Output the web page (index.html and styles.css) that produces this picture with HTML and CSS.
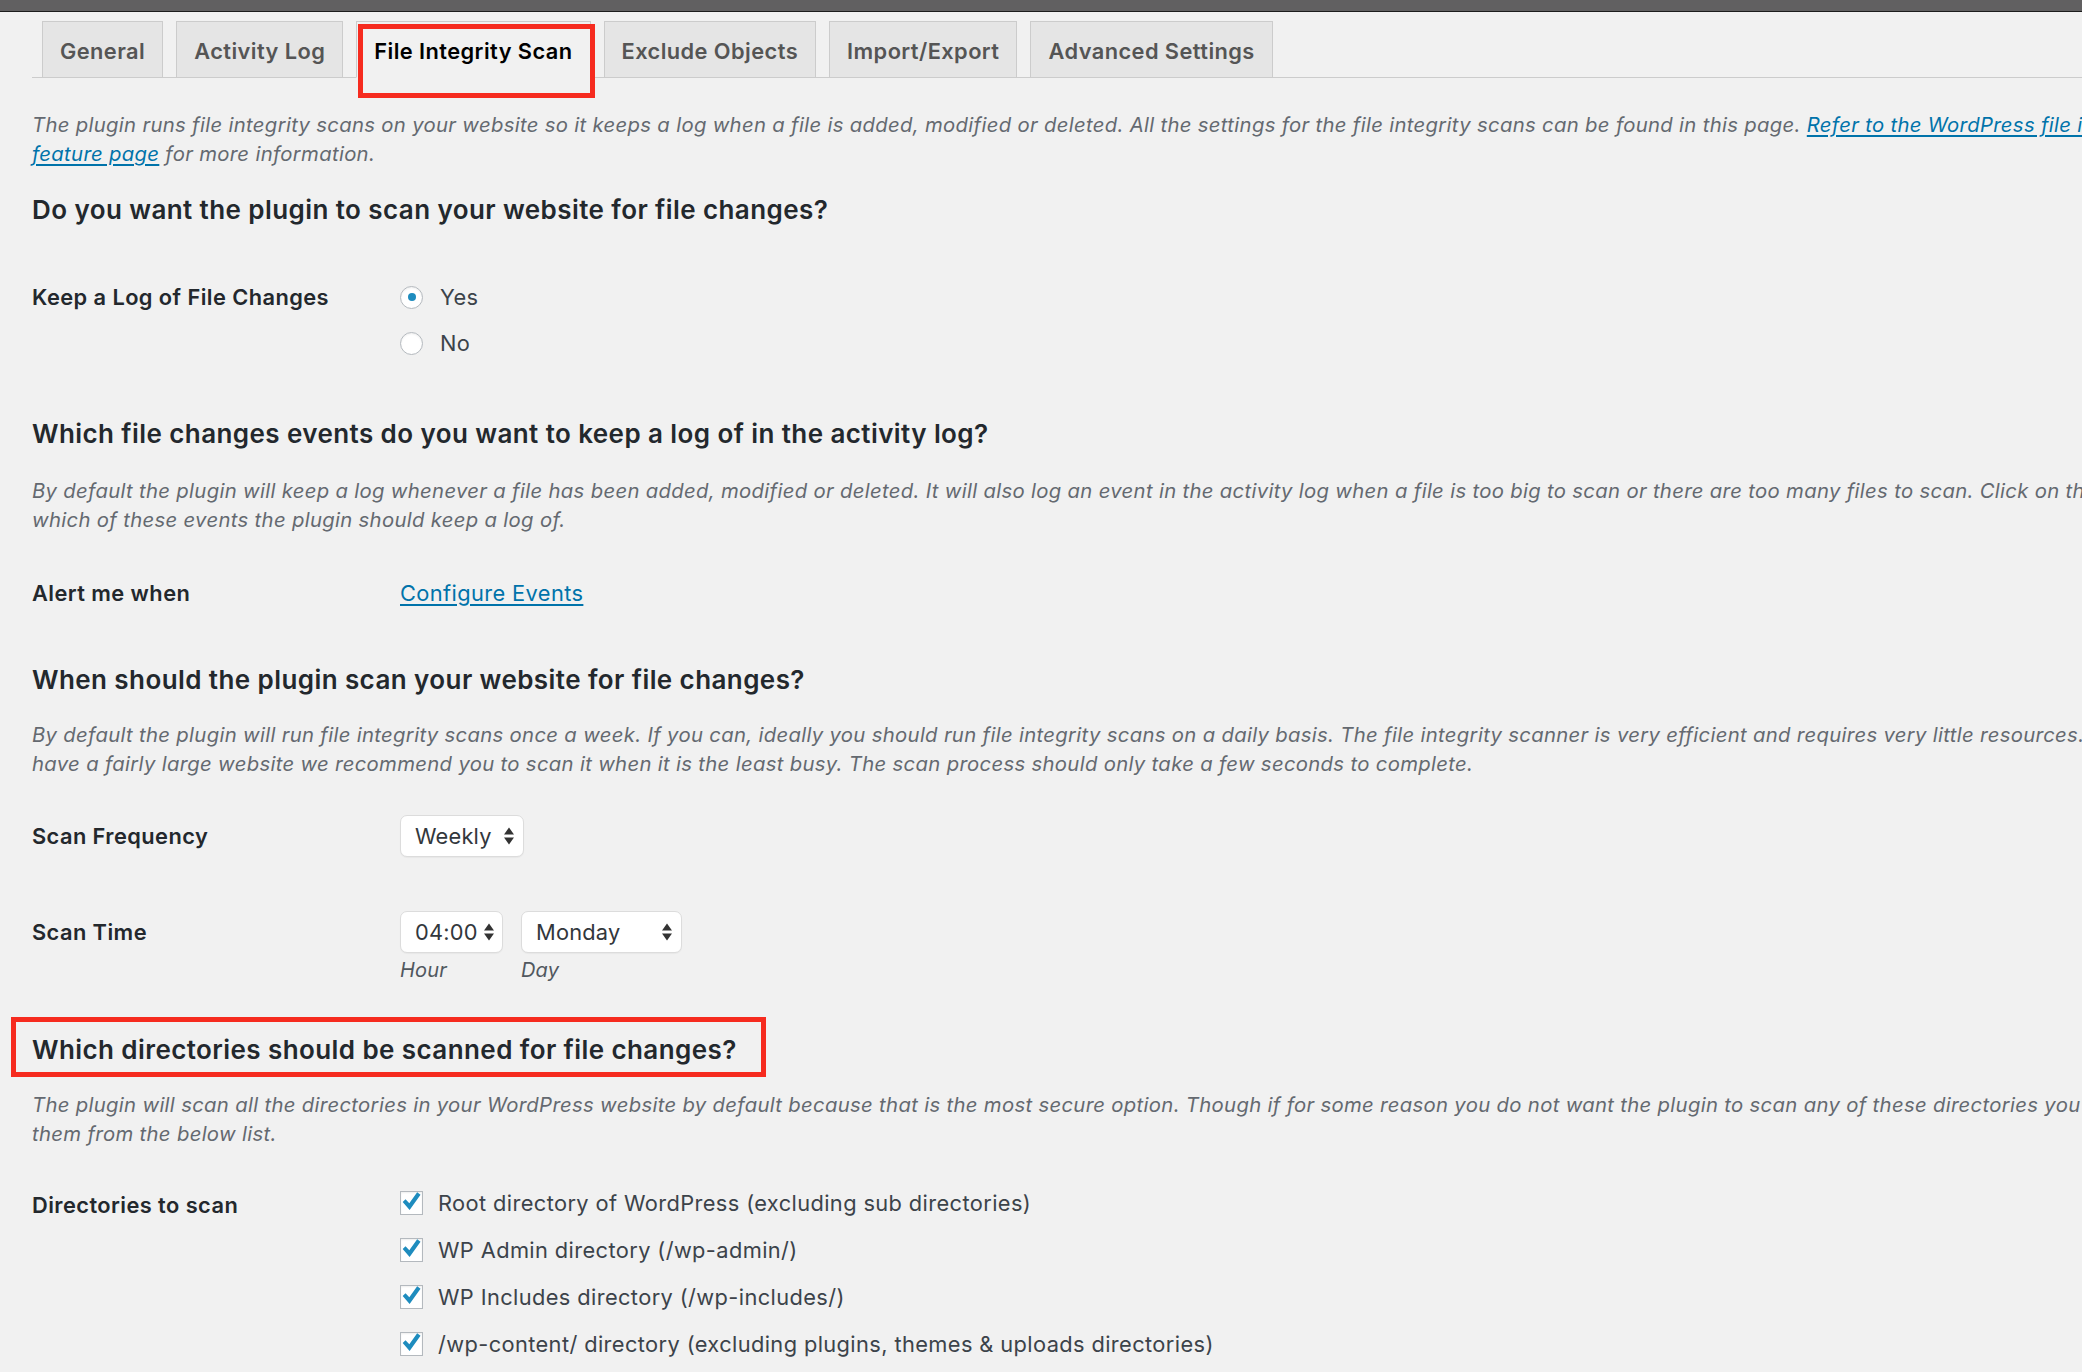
FILE: index.html
```html
<!DOCTYPE html>
<html lang="en">
<head>
<meta charset="utf-8">
<title>File Integrity Scan</title>
<link rel="stylesheet" href="styles.css">
</head>
<body>
<div class="topbar"></div>
<div class="wrap">
  <nav class="tabs">
    <a class="tab">General</a>
    <a class="tab">Activity Log</a>
    <a class="tab active">File Integrity Scan</a>
    <a class="tab">Exclude Objects</a>
    <a class="tab">Import/Export</a>
    <a class="tab">Advanced Settings</a>
  </nav>

  <p class="desc d1">The plugin runs file integrity scans on your website so it keeps a log when a file is added, modified or deleted. All the settings for the file integrity scans can be found in this page. <a class="link">Refer to the WordPress file integrity scans</a><br><a class="link">feature page</a> for more information.</p>

  <h2 class="h h1">Do you want the plugin to scan your website for file changes?</h2>
  <div class="row r1">
    <div class="label">Keep a Log of File Changes</div>
    <div class="field">
      <label class="opt"><span class="radio checked"></span>Yes</label>
      <label class="opt"><span class="radio"></span>No</label>
    </div>
  </div>

  <h2 class="h h2">Which file changes events do you want to keep a log of in the activity log?</h2>
  <p class="desc d2">By default the plugin will keep a log whenever a file has been added, modified or deleted. It will also log an event in the activity log when a file is too big to scan or there are too many files to scan. Click on the link to specify<br>which of these events the plugin should keep a log of.</p>
  <div class="row r2">
    <div class="label">Alert me when</div>
    <div class="field"><a class="link plain">Configure Events</a></div>
  </div>

  <h2 class="h h3">When should the plugin scan your website for file changes?</h2>
  <p class="desc d3">By default the plugin will run file integrity scans once a week. If you can, ideally you should run file integrity scans on a daily basis. The file integrity scanner is very efficient and requires very little resources. If you<br>have a fairly large website we recommend you to scan it when it is the least busy. The scan process should only take a few seconds to complete.</p>
  <div class="row r3">
    <div class="label sel-label">Scan Frequency</div>
    <div class="field">
      <div class="select w-weekly"><span>Weekly</span><svg class="arr" viewBox="0 0 10 20" width="10" height="20"><polygon points="0,8.5 5,1.5 10,8.5"/><polygon points="0,11.5 5,18.5 10,11.5"/></svg></div>
    </div>
  </div>
  <div class="row r4">
    <div class="label sel-label">Scan Time</div>
    <div class="field time">
      <div class="tcol">
        <div class="select w-hour"><span>04:00</span><svg class="arr" viewBox="0 0 10 20" width="10" height="20"><polygon points="0,8.5 5,1.5 10,8.5"/><polygon points="0,11.5 5,18.5 10,11.5"/></svg></div>
        <div class="cap">Hour</div>
      </div>
      <div class="tcol">
        <div class="select w-day"><span>Monday</span><svg class="arr" viewBox="0 0 10 20" width="10" height="20"><polygon points="0,8.5 5,1.5 10,8.5"/><polygon points="0,11.5 5,18.5 10,11.5"/></svg></div>
        <div class="cap">Day</div>
      </div>
    </div>
  </div>

  <h2 class="h boxed">Which directories should be scanned for file changes?</h2>
  <p class="desc d4">The plugin will scan all the directories in your WordPress website by default because that is the most secure option. Though if for some reason you do not want the plugin to scan any of these directories you can uncheck<br>them from the below list.</p>
  <div class="row r5">
    <div class="label cb-label">Directories to scan</div>
    <div class="field">
      <label class="opt cbopt"><span class="cb"><svg viewBox="0 0 20 20" width="21" height="21"><path d="M1.6 10.4 L4.3 7.9 L7.9 11.6 L15.4 1.2 L18.6 3.6 L8.2 18.2 Z"/></svg></span>Root directory of WordPress (excluding sub directories)</label>
      <label class="opt cbopt"><span class="cb"><svg viewBox="0 0 20 20" width="21" height="21"><path d="M1.6 10.4 L4.3 7.9 L7.9 11.6 L15.4 1.2 L18.6 3.6 L8.2 18.2 Z"/></svg></span>WP Admin directory (/wp-admin/)</label>
      <label class="opt cbopt"><span class="cb"><svg viewBox="0 0 20 20" width="21" height="21"><path d="M1.6 10.4 L4.3 7.9 L7.9 11.6 L15.4 1.2 L18.6 3.6 L8.2 18.2 Z"/></svg></span>WP Includes directory (/wp-includes/)</label>
      <label class="opt cbopt"><span class="cb"><svg viewBox="0 0 20 20" width="21" height="21"><path d="M1.6 10.4 L4.3 7.9 L7.9 11.6 L15.4 1.2 L18.6 3.6 L8.2 18.2 Z"/></svg></span>/wp-content/ directory (excluding plugins, themes &amp; uploads directories)</label>
    </div>
  </div>
</div>
</body>
</html>
```

FILE: styles.css
```css
* { box-sizing: border-box; }

html, body {
  margin: 0;
  padding: 0;
  overflow: hidden;
  background: #f1f1f1;
}

body {
  width: 2082px;
  height: 1372px;
  font-family: Inter, "Noto Sans", "Liberation Sans", sans-serif;
  color: #23282d;
}

.topbar {
  height: 12px;
  background: #616061;
  border-bottom: 1px solid #1c1c1c;
}

.wrap {
  padding-left: 32px;
}

/* Tabs */
.tabs {
  display: flex;
  align-items: flex-end;
  gap: 13px;
  height: 66px;
  padding-top: 9px;
  padding-left: 10px;
  border-bottom: 1px solid #cccccc;
}

.tab {
  position: relative;
  display: block;
  height: 57px;
  margin-bottom: -1px;
  padding: 11px 17px 0;
  border: 1px solid #cccccc;
  background: #e5e5e5;
  color: #555555;
  font-size: 21.8px;
  font-weight: 600;
  letter-spacing: 0.02em;
  line-height: 36px;
  white-space: nowrap;
}

.tab.active {
  background: #f1f1f1;
  border-bottom-color: #f1f1f1;
  color: #000000;
}

.tab.active::after {
  content: "";
  position: absolute;
  left: 1px;
  right: -5px;
  top: 2px;
  height: 64px;
  border: 5px solid #f62b1f;
  z-index: 2;
}

/* Text */
.desc {
  margin: 0;
  font-size: 20.3px;
  letter-spacing: 0.016em;
  line-height: 29px;
  font-style: italic;
  color: #646970;
  white-space: nowrap;
}

.link {
  color: #0073aa;
  text-decoration: underline;
  text-underline-offset: 3px;
}

.h {
  margin: 0;
  font-size: 26px;
  font-weight: 600;
  letter-spacing: 0.016em;
  line-height: 32px;
  color: #23282d;
  white-space: nowrap;
}

.d1 { margin-top: 32px; }
.h1 { margin-top: 26px; }
.r1 { margin-top: 48px; }
.h2 { margin-top: 52px; }
.d2 { margin-top: 26px; }
.r2 { margin-top: 36px; }
.h3 { margin-top: 48px; }
.d3 { margin-top: 24px; }
.r3 { margin-top: 37px; }
.r4 { margin-top: 54px; }
.d4 { margin-top: 13px; }
.r5 { margin-top: 31px; }

.boxed {
  display: inline-block;
  margin-top: 32px;
  margin-left: -21px;
  padding: 12px 24px 6px 16px;
  border: 5px solid #f62b1f;
}

/* Rows */
.row {
  display: grid;
  grid-template-columns: 368px auto;
  align-items: start;
}

.label {
  font-size: 21.8px;
  font-weight: 600;
  letter-spacing: 0.02em;
  line-height: 46px;
  color: #23282d;
  white-space: nowrap;
}

.sel-label { line-height: 42px; }
.cb-label { line-height: 47px; padding-top: 3px; }

.field {
  font-size: 21.8px;
  letter-spacing: 0.018em;
  line-height: 46px;
  color: #3c434a;
}

.opt {
  display: flex;
  align-items: center;
  gap: 17px;
  height: 46px;
  color: #3c434a;
  white-space: nowrap;
}

.cbopt {
  height: 47px;
  gap: 15px;
}

.radio {
  position: relative;
  width: 23px;
  height: 23px;
  border-radius: 50%;
  border: 1.5px solid #b4b9be;
  background: #ffffff;
  box-shadow: inset 0 1px 2px rgba(0, 0, 0, 0.07);
  flex: none;
}

.radio.checked::after {
  content: "";
  position: absolute;
  left: 50%;
  top: 50%;
  width: 8px;
  height: 8px;
  margin: -4px 0 0 -4px;
  border-radius: 50%;
  background: #1e8cbe;
}

.cb {
  display: flex;
  align-items: flex-start;
  justify-content: center;
  width: 23px;
  height: 24px;
  border: 1.5px solid #b4b9be;
  background: #ffffff;
  box-shadow: inset 0 1px 2px rgba(0, 0, 0, 0.07);
  flex: none;
  overflow: visible;
}

.cb svg { fill: #1e8cbe; flex: none; margin-top: -1px; }

/* Selects */
.select {
  display: flex;
  align-items: center;
  justify-content: space-between;
  height: 42px;
  padding: 0 9px 0 14px;
  border: 1px solid #dcdcdc;
  border-radius: 7px;
  background: #ffffff;
  box-shadow: 0 1px 1px rgba(0, 0, 0, 0.04);
  font-size: 21.8px;
  letter-spacing: 0.01em;
  line-height: 40px;
  color: #32373c;
}

.w-weekly { width: 124px; }
.w-hour { width: 103px; padding-right: 8px; }
.w-day { width: 161px; }

.arr { fill: #333333; flex: none; }

.time {
  display: flex;
  gap: 18px;
}

.cap {
  margin-top: 2px;
  font-size: 20px;
  letter-spacing: 0.01em;
  line-height: 30px;
  font-style: italic;
  color: #50575e;
}
```
